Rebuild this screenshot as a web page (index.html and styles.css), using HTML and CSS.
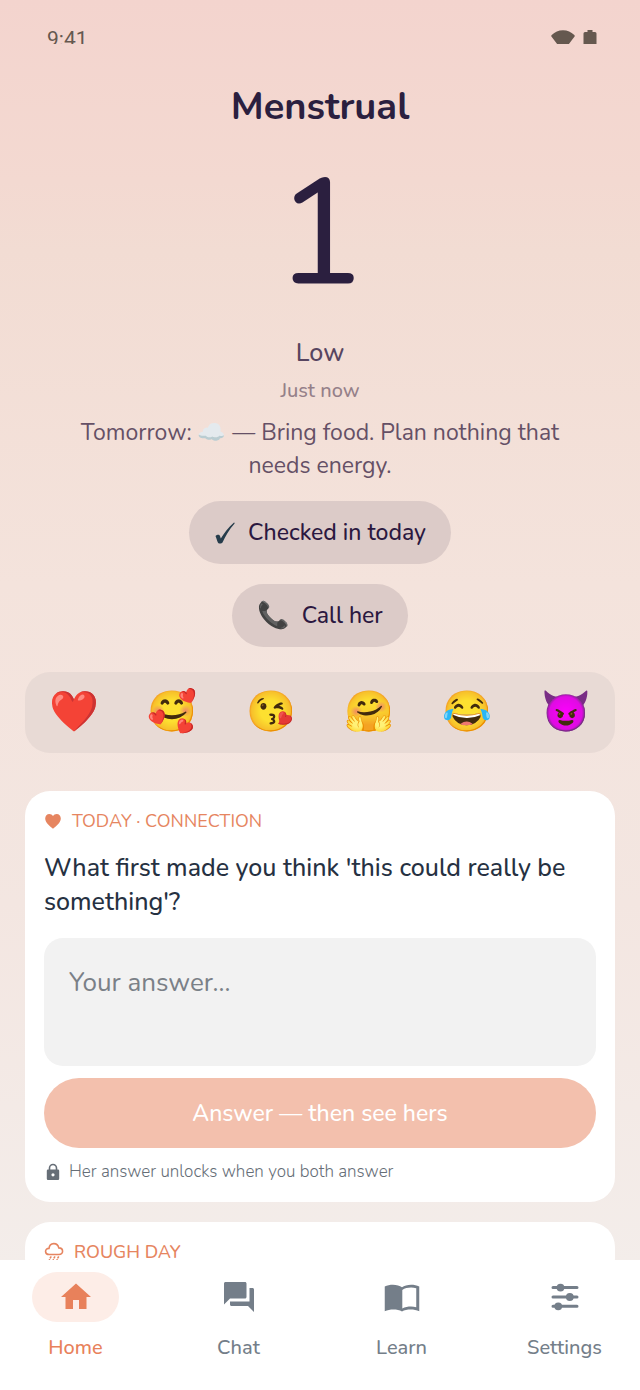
FILE: index.html
```html
<!DOCTYPE html>
<html lang="en">
<head>
    <meta charset="UTF-8">
    <meta name="viewport" content="width=device-width, initial-scale=1">
    <title>Home</title>
    <link rel="stylesheet" href="styles.css">
</head>
<body>
    <header class="status-bar">
        <span class="time">9:41</span>
        <span class="status-icons">
            <svg viewBox="0 0 24 24" width="24" height="24" aria-hidden="true"><path d="M.8 9C-.2 8 .3 7.300 1 6.700 3.800 4 7.500 2.200 12 2.200s8.200 1.800 11 4.500c.7.600 1.200 1.300.2 2.300L13 22.500q-1 1-2 0z"/></svg>
            <svg viewBox="0 0 14 24" width="14" height="24" aria-hidden="true"><path d="M4.500 2h5v2H12q1.500 0 1.500 1.500v15Q13.500 22 12 22H2Q.5 22 .5 20.500v-15Q.5 4 2 4h2.500z"/></svg>
        </span>
    </header>

    <main>
        <section class="today">
            <h1>Menstrual</h1>
            <div class="day">1</div>
            <p class="level">Low</p>
            <p class="updated">Just now</p>
            <p class="tip">Tomorrow: ☁️ — Bring food. Plan nothing that needs energy.</p>

            <button class="pill" type="button">
                <svg class="check" viewBox="0 0 22 24" aria-hidden="true"><path d="M1.500 15C3 13.500 5.300 13 6 15l.8 2.600C10 12.500 14.500 6 20 1.500c.8.200.8.700.4 1.200C15 8.500 11.500 15 8.500 21.500c-1 1.400-3.600 1.400-4.500.2C3 20 2.500 17 1.500 15z"/></svg>
                Checked in today
            </button>
            <button class="pill" type="button">
                <span class="phone">📞</span>
                Call her
            </button>
        </section>

        <section class="reactions" aria-label="Reactions">
            <button type="button" aria-label="Love">❤️</button>
            <button type="button" aria-label="Adore">🥰</button>
            <button type="button" aria-label="Kiss">😘</button>
            <button type="button" aria-label="Hug">🤗</button>
            <button type="button" aria-label="Laugh">😂</button>
            <button type="button" aria-label="Mischief">😈</button>
        </section>

        <section class="card">
            <h2>
                <svg viewBox="0 0 18 18" width="18" height="18" aria-hidden="true"><path d="M9 16.800C6 14.300 1.200 11 1.200 6.600 1.200 4 3 2 5.300 2 6.900 2 8.200 2.800 9 4c.8-1.200 2.100-2 3.700-2 2.300 0 4.100 2 4.100 4.600C16.800 11 12 14.300 9 16.800z" fill="currentColor"/></svg>
                TODAY · CONNECTION
            </h2>
            <label class="question" for="answer">What first made you think 'this could really be something'?</label>
            <textarea id="answer" placeholder="Your answer..."></textarea>
            <button class="submit" type="button">Answer — then see hers</button>
            <p class="note">
                <svg viewBox="0 0 18 18" width="18" height="18" aria-hidden="true">
                    <path d="M5.500 7V5a3.500 3.500 0 0 1 7 0v2" fill="none" stroke="currentColor" stroke-width="1.600"/>
                    <path d="M4 6.500h10q1.200 0 1.200 1.200v8q0 1.300-1.200 1.300H4q-1.200 0-1.200-1.300v-8Q2.800 6.500 4 6.500zM9 10.200a1.600 1.600 0 1 0 0 3.200 1.600 1.600 0 0 0 0-3.200z" fill="currentColor" fill-rule="evenodd"/>
                </svg>
                Her answer unlocks when you both answer
            </p>
        </section>

        <section class="card">
            <h2 class="strong">
                <svg viewBox="0 0 20 20" width="20" height="20" aria-hidden="true" fill="none" stroke="currentColor" stroke-width="1.600" stroke-linecap="round"><path d="M5.500 12.500C.2 12.500.5 6.200 5 6.400 5.700.2 13.500 0 14.800 5.900c5 0 5 6.600.2 6.600zM6.800 15l-.5.800M10.600 15l-.5.800M14.400 15l-.5.800M5.400 17.800l-.3.500M9.200 17.800l-.3.500M13 17.800l-.3.500"/></svg>
                ROUGH DAY
            </h2>
        </section>
    </main>

    <nav class="tabs">
        <a class="active" href="#home" aria-current="page">
            <span class="tab-icon"><svg viewBox="0 0 24 24"><path d="M10 20v-6h4v6h5v-8h3L12 3 2 12h3v8z"/></svg></span>
            Home
        </a>
        <a href="#chat">
            <span class="tab-icon"><svg viewBox="0 0 24 24"><path d="M21 6h-2v9H6v2c0 .55.45 1 1 1h11l4 4V7c0-.55-.45-1-1-1zm-4 6V3c0-.55-.45-1-1-1H3c-.55 0-1 .45-1 1v14l4-4h10c.55 0 1-.45 1-1z"/></svg></span>
            Chat
        </a>
        <a href="#learn">
            <span class="tab-icon"><svg viewBox="0 0 24 24"><path d="M12 5.500C9.500 3.500 4 3.200.5 5v16.500C4 20 9 20 12 21.700c3-1.700 8-1.700 11.500-.2V5C20 3.200 14.500 3.500 12 5.500zM21.500 18.800c-3-.8-6.500-.5-9.300.8V7.300c2.500-1.700 6.300-2 9.300-1.100z" fill-rule="evenodd"/></svg></span>
            Learn
        </a>
        <a href="#settings">
            <span class="tab-icon"><svg viewBox="0 0 24 24"><path d="M4 5.700h16M4 12h16M4 18.200h16" stroke="currentColor" stroke-width="2" stroke-linecap="round"/><circle cx="9" cy="5.700" r="2.600"/><circle cx="15.200" cy="12" r="2.600"/><circle cx="7.500" cy="18.200" r="2.600"/></svg></span>
            Settings
        </a>
    </nav>
</body>
</html>
```
FILE: styles.css
```css
* {
    box-sizing: border-box;
}

body {
    margin: 0;
    height: 100vh;
    display: flex;
    flex-direction: column;
    background: linear-gradient(#f3d4ce 0%, #f3d9d1 13%, #f2dcd3 18%, #f4e3dc 42%, #f3e6e1 65%, #f3edea 91%);
    color: #2b1f3f;
    font-family: Nunito, Lato, "Open Sans", "Noto Color Emoji", sans-serif;
}

h1, h2, p {
    margin: 0;
}

button {
    border: none;
    font-family: inherit;
    cursor: pointer;
}

/* status bar */
.status-bar {
    flex: none;
    display: flex;
    justify-content: space-between;
    align-items: flex-start;
    height: 44px;
    padding: 28px 43px 0 47px;
    overflow: hidden;
    color: #65584f;
}

.time {
    font-family: Roboto, sans-serif;
    font-size: 21px;
    line-height: 22px;
}

.status-icons {
    display: flex;
    gap: 8px;
    fill: currentColor;
}

main {
    flex: 1;
    min-height: 0;
    padding: 39px 25px 0;
    overflow-y: auto;
    scrollbar-width: none;
}

.today {
    display: flex;
    flex-direction: column;
    align-items: center;
    text-align: center;
}

h1 {
    font-size: 38px;
    line-height: 48px;
}

.day {
    font-size: 150px;
    line-height: 205px;
}

.level {
    margin-bottom: 8px;
    font-size: 25px;
    line-height: 34px;
    font-weight: 500;
    color: #574560;
}

.updated {
    margin-bottom: 12px;
    font-size: 20px;
    line-height: 26px;
    font-weight: 500;
    color: #958089;
}

.tip {
    max-width: 500px;
    margin-bottom: 19px;
    font-size: 23px;
    line-height: 33px;
    color: #655066;
}

.pill {
    display: flex;
    align-items: center;
    gap: 12px;
    min-height: 63px;
    padding: 0 25px;
    border-radius: 32px;
    background: #dccbc8;
    color: #2b1840;
    font-size: 23px;
    font-weight: 500;
}

.pill + .pill {
    margin-top: 20px;
}

.check {
    width: 22px;
    height: 24px;
    fill: #263c4b;
}

.phone {
    font-size: 26px;
}

/* reactions */
.reactions {
    display: grid;
    grid-template-columns: repeat(6, 1fr);
    margin: 25px 0 38px;
    padding: 16px 0;
    border-radius: 25px;
    background: #e8dad5;
}

.reactions button {
    padding: 0;
    background: none;
    font-size: 40px;
    line-height: 49px;
}

/* cards */
.card {
    display: flex;
    flex-direction: column;
    margin-bottom: 20px;
    padding: 18px 19px;
    border-radius: 25px;
    background: #fff;
}

h2 {
    display: flex;
    align-items: center;
    gap: 10px;
    font-size: 18px;
    line-height: 24px;
    font-weight: 400;
    color: #e68560;
}

.strong {
    font-weight: 500;
}

.question {
    margin: 18px 0 19px;
    font-size: 25px;
    line-height: 34px;
    font-weight: 500;
    color: #263142;
}

textarea {
    height: 128px;
    padding: 27px 25px;
    border: none;
    border-radius: 19px;
    background: #f2f2f2;
    color: #263142;
    font-family: inherit;
    font-size: 26px;
    line-height: 36px;
    resize: none;
}

textarea::placeholder {
    color: #7a8087;
}

.submit {
    min-height: 70px;
    margin: 12px 0;
    border-radius: 35px;
    background: #f3c0ad;
    color: #fff;
    font-size: 23px;
    font-weight: 500;
}

.note {
    display: flex;
    align-items: center;
    gap: 7px;
    font-size: 17px;
    line-height: 24px;
    font-weight: 300;
    color: #666e77;
}

/* bottom tabs */
.tabs {
    flex: none;
    display: flex;
    justify-content: space-between;
    padding: 12px 32px 28px;
    background: #fff;
}

.tabs a {
    display: flex;
    flex-direction: column;
    align-items: center;
    gap: 12px;
    width: 87px;
    color: #747e89;
    font-size: 20px;
    line-height: 28px;
    font-weight: 500;
    text-decoration: none;
}

.tabs .active {
    color: #e8815b;
}

.tab-icon {
    display: flex;
    align-items: center;
    justify-content: center;
    width: 87px;
    height: 50px;
    border-radius: 25px;
}

.active .tab-icon {
    background: #fdede7;
}

.tab-icon svg {
    width: 36px;
    height: 36px;
    fill: currentColor;
}
```
